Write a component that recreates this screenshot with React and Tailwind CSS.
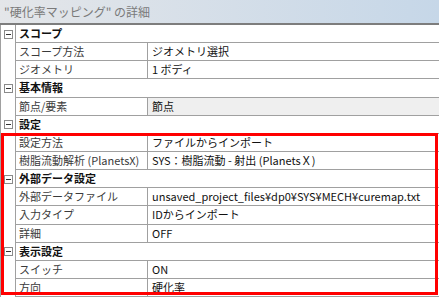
import React from "react";

const rows = [
  { cat: "スコープ" },
  { k: "スコープ方法", v: "ジオメトリ選択" },
  { k: "ジオメトリ", v: "1 ボディ" },
  { cat: "基本情報" },
  { k: "節点/要素", v: "節点", ro: true },
  { cat: "設定" },
  { k: "設定方法", v: "ファイルからインポート" },
  { k: "樹脂流動解析 (PlanetsX)", v: "SYS：樹脂流動 - 射出 (PlanetsＸ)" },
  { cat: "外部データ設定" },
  { k: "外部データファイル", v: "unsaved_project_files¥dp0¥SYS¥MECH¥curemap.txt" },
  { k: "入力タイプ", v: "IDからインポート" },
  { k: "詳細", v: "OFF" },
  { cat: "表示設定" },
  { k: "スイッチ", v: "ON" },
  { k: "方向", v: "硬化率" },
];

function Minus() {
  return (
    <div className="w-[9px] h-[9px] border border-[#8a8a8a] bg-white flex items-center justify-center">
      <div className="w-[5px] h-px bg-[#333]" />
    </div>
  );
}

export default function App() {
  return (
    <div
      className="relative w-[439px] h-[297px] bg-white flex flex-col overflow-hidden text-[11px]"
      style={{ fontFamily: '"Noto Sans CJK JP", "Noto Sans", sans-serif' }}
    >
      <div className="h-[25px] shrink-0 border-b-2 border-[#7d7d7d] bg-gradient-to-r from-[#e4e6e9] to-[#c6d7e8] flex items-center pl-[4px] text-[12px] text-[#7a7a7a] leading-none">
        "硬化率マッピング" の詳細
      </div>
      <div className="flex-1 flex flex-col border-l border-[#a0a0a0]">
        {rows.map((r, i) => (
          <div key={i} className="flex-1 flex min-h-0">
            <div className="w-[15px] shrink-0 border-r border-[#a0a0a0] flex items-center justify-center">
              {r.cat && <Minus />}
            </div>
            {r.cat ? (
              <div className="flex-1 border-b border-[#a0a0a0] flex items-center pl-[3px] font-bold text-[#111] leading-none">
                {r.cat}
              </div>
            ) : (
              <>
                <div className="w-[132px] shrink-0 border-b border-r border-[#a0a0a0] flex items-center pl-[3px] text-[#3a3a3a] leading-none whitespace-nowrap overflow-hidden">
                  {r.k}
                </div>
                <div
                  className={
                    "flex-1 border-b border-[#a0a0a0] flex items-center pl-[4px] text-[#111] leading-none whitespace-nowrap overflow-hidden " +
                    (r.ro ? "bg-[#efefef]" : "bg-white")
                  }
                >
                  {r.v}
                </div>
              </>
            )}
          </div>
        ))}
      </div>
      <div className="absolute left-[1px] top-[133px] w-[437px] h-[162px] border-[3px] border-[#ff0000] pointer-events-none" />
    </div>
  );
}
